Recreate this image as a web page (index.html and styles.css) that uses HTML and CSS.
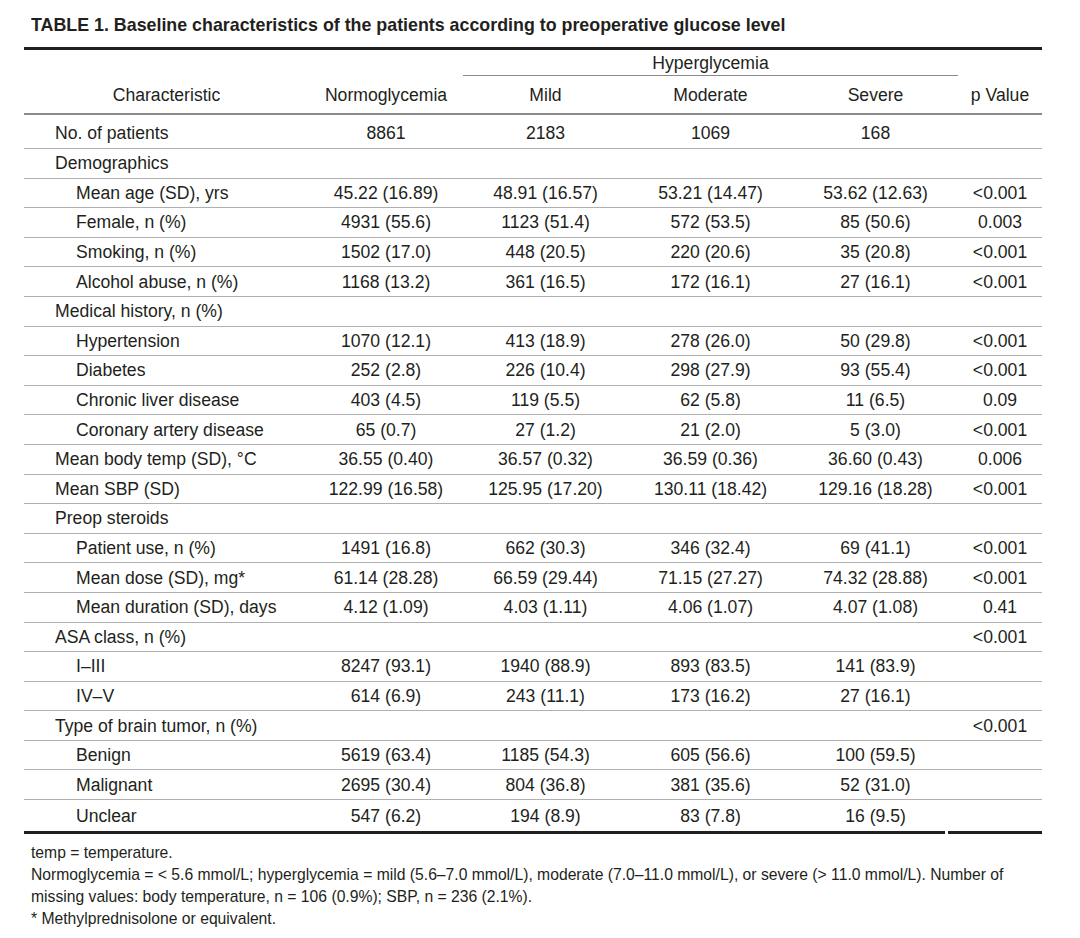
FILE: index.html
```html
<!DOCTYPE html>
<html lang="en">
<head>
<meta charset="utf-8">
<title>Table 1</title>
<link rel="stylesheet" href="styles.css">
</head>
<body>
<div class="page">
  <h1 class="title">TABLE 1. Baseline characteristics of the patients according to preoperative glucose level</h1>
  <table class="data">
    <colgroup>
      <col class="c-char">
      <col class="c-norm">
      <col class="c-grp">
      <col class="c-grp">
      <col class="c-grp">
      <col class="c-p">
    </colgroup>
    <thead>
      <tr class="h1">
        <th></th>
        <th></th>
        <th colspan="3" class="span">Hyperglycemia</th>
        <th></th>
      </tr>
      <tr class="h2">
        <th>Characteristic</th>
        <th>Normoglycemia</th>
        <th>Mild</th>
        <th>Moderate</th>
        <th>Severe</th>
        <th>p Value</th>
      </tr>
    </thead>
    <tbody>
      <tr class="first"><td class="lab">No. of patients</td><td>8861</td><td>2183</td><td>1069</td><td>168</td><td></td></tr>
      <tr><td class="lab">Demographics</td><td></td><td></td><td></td><td></td><td></td></tr>
      <tr><td class="sub">Mean age (SD), yrs</td><td>45.22 (16.89)</td><td>48.91 (16.57)</td><td>53.21 (14.47)</td><td>53.62 (12.63)</td><td>&lt;0.001</td></tr>
      <tr><td class="sub">Female, n (%)</td><td>4931 (55.6)</td><td>1123 (51.4)</td><td>572 (53.5)</td><td>85 (50.6)</td><td>0.003</td></tr>
      <tr><td class="sub">Smoking, n (%)</td><td>1502 (17.0)</td><td>448 (20.5)</td><td>220 (20.6)</td><td>35 (20.8)</td><td>&lt;0.001</td></tr>
      <tr><td class="sub">Alcohol abuse, n (%)</td><td>1168 (13.2)</td><td>361 (16.5)</td><td>172 (16.1)</td><td>27 (16.1)</td><td>&lt;0.001</td></tr>
      <tr><td class="lab">Medical history, n (%)</td><td></td><td></td><td></td><td></td><td></td></tr>
      <tr><td class="sub">Hypertension</td><td>1070 (12.1)</td><td>413 (18.9)</td><td>278 (26.0)</td><td>50 (29.8)</td><td>&lt;0.001</td></tr>
      <tr><td class="sub">Diabetes</td><td>252 (2.8)</td><td>226 (10.4)</td><td>298 (27.9)</td><td>93 (55.4)</td><td>&lt;0.001</td></tr>
      <tr><td class="sub">Chronic liver disease</td><td>403 (4.5)</td><td>119 (5.5)</td><td>62 (5.8)</td><td>11 (6.5)</td><td>0.09</td></tr>
      <tr><td class="sub">Coronary artery disease</td><td>65 (0.7)</td><td>27 (1.2)</td><td>21 (2.0)</td><td>5 (3.0)</td><td>&lt;0.001</td></tr>
      <tr><td class="lab">Mean body temp (SD), °C</td><td>36.55 (0.40)</td><td>36.57 (0.32)</td><td>36.59 (0.36)</td><td>36.60 (0.43)</td><td>0.006</td></tr>
      <tr><td class="lab">Mean SBP (SD)</td><td>122.99 (16.58)</td><td>125.95 (17.20)</td><td>130.11 (18.42)</td><td>129.16 (18.28)</td><td>&lt;0.001</td></tr>
      <tr><td class="lab">Preop steroids</td><td></td><td></td><td></td><td></td><td></td></tr>
      <tr><td class="sub">Patient use, n (%)</td><td>1491 (16.8)</td><td>662 (30.3)</td><td>346 (32.4)</td><td>69 (41.1)</td><td>&lt;0.001</td></tr>
      <tr><td class="sub">Mean dose (SD), mg*</td><td>61.14 (28.28)</td><td>66.59 (29.44)</td><td>71.15 (27.27)</td><td>74.32 (28.88)</td><td>&lt;0.001</td></tr>
      <tr><td class="sub">Mean duration (SD), days</td><td>4.12 (1.09)</td><td>4.03 (1.11)</td><td>4.06 (1.07)</td><td>4.07 (1.08)</td><td>0.41</td></tr>
      <tr><td class="lab">ASA class, n (%)</td><td></td><td></td><td></td><td></td><td>&lt;0.001</td></tr>
      <tr><td class="sub">I–III</td><td>8247 (93.1)</td><td>1940 (88.9)</td><td>893 (83.5)</td><td>141 (83.9)</td><td></td></tr>
      <tr><td class="sub">IV–V</td><td>614 (6.9)</td><td>243 (11.1)</td><td>173 (16.2)</td><td>27 (16.1)</td><td></td></tr>
      <tr><td class="lab">Type of brain tumor, n (%)</td><td></td><td></td><td></td><td></td><td>&lt;0.001</td></tr>
      <tr><td class="sub">Benign</td><td>5619 (63.4)</td><td>1185 (54.3)</td><td>605 (56.6)</td><td>100 (59.5)</td><td></td></tr>
      <tr><td class="sub">Malignant</td><td>2695 (30.4)</td><td>804 (36.8)</td><td>381 (35.6)</td><td>52 (31.0)</td><td></td></tr>
      <tr class="last"><td class="sub">Unclear</td><td>547 (6.2)</td><td>194 (8.9)</td><td>83 (7.8)</td><td class="gap">16 (9.5)</td><td></td></tr>
    </tbody>
  </table>
  <div class="notes">
    <p>temp = temperature.</p>
    <p>Normoglycemia = &lt; 5.6 mmol/L; hyperglycemia = mild (5.6–7.0 mmol/L), moderate (7.0–11.0 mmol/L), or severe (&gt; 11.0 mmol/L). Number of<br>missing values: body temperature, n = 106 (0.9%); SBP, n = 236 (2.1%).</p>
    <p>* Methylprednisolone or equivalent.</p>
  </div>
</div>
</body>
</html>
```
FILE: styles.css
```css
html, body {
  margin: 0;
  padding: 0;
  background: #ffffff;
}

body {
  color: #231f20;
  font-family: "Liberation Sans", Arial, sans-serif;
}

.page {
  padding: 14px 0 0 24px;
  width: 1018px;
}

.title {
  margin: 0 0 0 7px;
  height: 33px;
  font-family: "Liberation Sans", Arial, sans-serif;
  font-size: 19px;
  font-weight: bold;
  line-height: 22px;
  white-space: nowrap;
  transform: scaleX(0.938);
  transform-origin: left center;
}

.data {
  width: 1018px;
  table-layout: fixed;
  border-collapse: separate;
  border-spacing: 0;
  border-top: 3px solid #231f20;
  border-bottom: 3px solid #231f20;
  font-size: 17.6px;
}

.c-char { width: 285px; }
.c-norm { width: 154px; }
.c-grp { width: 165px; }
.c-p { width: 84px; }

.data th,
.data td {
  padding: 0;
  text-align: center;
  vertical-align: middle;
  font-weight: normal;
  white-space: nowrap;
  line-height: 20px;
}

.h1 th {
  height: 25px;
}

.h1 .span {
  border-bottom: 1px solid #8a8a8a;
}

.h2 th {
  height: 37px;
  border-bottom: 2px solid #8a8a8a;
}

.data tbody td {
  height: 28.6px;
  border-bottom: 1px solid #b0b0b0;
}

.data tbody tr.first td {
  height: 30px;
  padding-top: 3px;
}

.data tbody tr.last td {
  height: 31px;
  border-bottom: 0;
}

.data td.gap {
  position: relative;
}

.data td.gap::after {
  content: "";
  position: absolute;
  left: 152px;
  bottom: -3px;
  width: 3px;
  height: 3px;
  background: #ffffff;
}

.data td.lab {
  text-align: left;
  padding-left: 31px;
}

.data td.sub {
  text-align: left;
  padding-left: 52px;
}

.notes {
  margin: 8px 0 0 7px;
  font-size: 15.7px;
  line-height: 22px;
}

.notes p {
  margin: 0;
  white-space: nowrap;
}
```
